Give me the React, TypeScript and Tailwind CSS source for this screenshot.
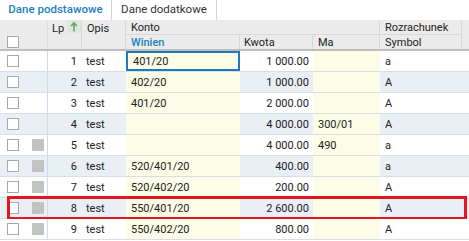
import React from 'react';

interface Row {
  lp: number;
  opis: string;
  winien: string;
  kwota: string;
  ma: string;
  symbol: string;
  marker: boolean;
}

const rows: Row[] = [
  { lp: 1, opis: 'test', winien: '401/20', kwota: '1 000.00', ma: '', symbol: 'a', marker: false },
  { lp: 2, opis: 'test', winien: '402/20', kwota: '1 000.00', ma: '', symbol: 'A', marker: false },
  { lp: 3, opis: 'test', winien: '401/20', kwota: '2 000.00', ma: '', symbol: 'A', marker: false },
  { lp: 4, opis: 'test', winien: '', kwota: '4 000.00', ma: '300/01', symbol: 'A', marker: false },
  { lp: 5, opis: 'test', winien: '', kwota: '4 000.00', ma: '490', symbol: 'a', marker: true },
  { lp: 6, opis: 'test', winien: '520/401/20', kwota: '400.00', ma: '', symbol: 'a', marker: true },
  { lp: 7, opis: 'test', winien: '520/402/20', kwota: '200.00', ma: '', symbol: 'A', marker: true },
  { lp: 8, opis: 'test', winien: '550/401/20', kwota: '2 600.00', ma: '', symbol: 'A', marker: true },
  { lp: 9, opis: 'test', winien: '550/402/20', kwota: '800.00', ma: '', symbol: 'A', marker: true },
];

const Checkbox = () => (
  <div className="w-[12px] h-[12px] bg-white border border-[#a8a8a8]" />
);

function App() {
  return (
    <div className="w-[469px] h-[241px] overflow-hidden bg-white text-[11px] text-[#222] font-['Roboto',sans-serif] leading-none">
      {/* tabs */}
      <div className="flex h-[20px]">
        <div className="w-[111px] flex items-center justify-center text-[11.5px] font-medium text-[#1a7fc1]">
          Dane podstawowe
        </div>
        <div className="w-[106px] flex items-center justify-center text-[11.5px] text-[#333] border-x border-[#d4d4d4]">
          Dane dodatkowe
        </div>
        <div className="flex-1" />
      </div>

      {/* header */}
      <div className="flex h-[31px] bg-[#ebebeb] border-b-2 border-[#bdbdbd]">
        <div className="w-[26px] flex items-end justify-center pb-[1px]">
          <Checkbox />
        </div>
        <div className="w-[22px] border-r border-[#e0e0e0]" />
        <div className="w-[34px] flex items-start pt-[3px] pl-[4px] border-r border-[#d8d8d8] gap-[3px]">
          <span>Lp</span>
          <span className="w-[15px] h-[13px] -mt-[3px] flex items-center justify-center bg-[#e4e4e4]">
            <svg width="8" height="10" viewBox="0 0 8 10">
              <path d="M4 1 L4 9.5" stroke="#4caf50" strokeWidth="1.6" />
              <path d="M1 4 L4 1 L7 4" stroke="#4caf50" strokeWidth="1.6" fill="none" />
            </svg>
          </span>
        </div>
        <div className="w-[44px] pt-[3px] pl-[5px] border-r border-[#d8d8d8]">Opis</div>
        <div className="flex flex-col">
          <div className="flex h-[15px]">
            <div className="w-[254px] pl-[5px] flex items-center border-r border-b border-[#d8d8d8]">Konto</div>
            <div className="w-[82px] pl-[5px] flex items-center border-r border-b border-[#d8d8d8]">Rozrachunek</div>
          </div>
          <div className="flex h-[14px]">
            <div className="w-[114px] pl-[5px] flex items-center border-r border-[#d8d8d8] font-medium text-[#1a7fc1]">Winien</div>
            <div className="w-[73px] pl-[4px] flex items-center border-r border-[#d8d8d8]">Kwota</div>
            <div className="w-[67px] pl-[5px] flex items-center border-r border-[#d8d8d8]">Ma</div>
            <div className="w-[82px] pl-[5px] flex items-center border-r border-[#d8d8d8]">Symbol</div>
          </div>
        </div>
      </div>

      {/* rows */}
      {rows.map((r, i) => {
        const even = i % 2 === 1;
        return (
          <div
            key={r.lp}
            className={`relative flex h-[21px] border-b border-[#d6dee7] ${even ? 'bg-[#e9eff5]' : 'bg-white'}`}
          >
            <div className="w-[26px] flex items-center justify-center">
              <Checkbox />
            </div>
            <div className="w-[22px] flex items-center pl-[6px] border-r border-[#c9dcf2]">
              {r.marker && <div className="w-[12px] h-[12px] rounded-[1px] bg-[#c2c2c2]" />}
            </div>
            <div className="w-[34px] flex items-center justify-end pr-[5px]">{r.lp}</div>
            <div className="w-[44px] flex items-center pl-[4px]">{r.opis}</div>
            <div
              className={`w-[114px] flex items-center pl-[5px] bg-[#fdfde7] ${
                i === 0 ? 'border-2 border-[#1b7bbf] pl-[3px]' : ''
              }`}
            >
              {r.winien}
            </div>
            <div className="w-[73px] flex items-center justify-end pr-[4px]">{r.kwota}</div>
            <div className="w-[67px] flex items-center pl-[5px] bg-[#fdfde7]">{r.ma}</div>
            <div className="w-[82px] flex items-center pl-[5px]">{r.symbol}</div>
            <div className="flex-1" />
            {r.lp === 8 && (
              <div className="absolute left-[7px] right-[2px] top-[-2px] bottom-[-2px] border-[3px] border-[#e3151f]" />
            )}
          </div>
        );
      })}
    </div>
  );
}

export default App;
